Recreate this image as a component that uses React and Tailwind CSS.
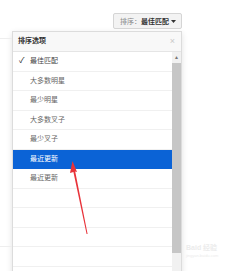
const items = ['最佳匹配', '大多数明星', '最少明星', '大多数叉子', '最少叉子', '最近更新', '最近更新', '', '', '', '', ''];

export default function App() {
  return (
    <div
      className="relative w-[241px] h-[271px] overflow-hidden bg-white"
      style={{ fontFamily: '"Liberation Sans", "Noto Sans CJK SC", sans-serif' }}
    >
      {/* faint page lines behind the panel */}
      <div className="absolute left-0 top-[38px] w-[12px] h-px bg-[#eeeeee]" />
      <div className="absolute left-0 top-[246px] w-[12px] h-px bg-[#eeeeee]" />

      <div className="flex justify-end pr-[59px] pt-[13px]">
        <div className="flex items-center h-[16px] w-[69px] pl-[6px] rounded-[2px] border border-[#d5d5d5] bg-[#f3f3f3] text-[7px] leading-none">
          <span className="text-[#888]">排序：</span>
          <span className="font-bold text-[#333]">最佳匹配</span>
          <svg className="ml-[2px]" width="5" height="3" viewBox="0 0 5 3">
            <polygon points="0,0 5,0 2.5,3" fill="#333" />
          </svg>
        </div>
      </div>

      <div className="ml-[12px] mt-[2px] w-[170px] border border-[#dcdcdc] bg-white shadow-[0_2px_6px_rgba(0,0,0,0.12)]">
        <div className="flex items-center justify-between h-[20px] pl-[5px] pr-[6px] bg-[#f8f8f8] border-b border-[#e5e5e5]">
          <span className="text-[7px] font-bold text-[#333]">排序选项</span>
          <span className="text-[9px] text-[#c8c8c8] leading-none">×</span>
        </div>
        <div className="flex">
          <div className="flex-1 flex flex-col">
            {items.map((t, i) => (
              <div
                key={i}
                className={`flex items-center h-[19.5px] shrink-0 border-b text-[7px] ${
                  i === 5 ? 'bg-[#0b63d6] border-[#0b63d6] text-white' : 'border-[#f0f0f0] text-[#666]'
                }`}
              >
                <span className="w-[17px] pl-[6px] text-[8px] text-[#222]">{i === 0 ? '✓' : ''}</span>
                <span className={i === 0 ? 'text-[#444]' : ''}>{t}</span>
              </div>
            ))}
          </div>
          <div className="w-[9px] flex flex-col items-center bg-[#f1f1f1]">
            <span className="mt-[3px] text-[5px] leading-none text-[#777]">▲</span>
            <div className="mt-[3px] w-[9px] h-[190px] bg-[#c6c6c6]" />
          </div>
        </div>
      </div>

      {/* watermark */}
      <div className="absolute left-[186px] top-[244px] flex flex-col leading-none text-[#ececec]">
        <span className="text-[7px] font-bold">Baid 经验</span>
        <span className="text-[4px] mt-[3px]">jingyan.baidu.com</span>
      </div>

      {/* red arrow annotation */}
      <svg className="absolute left-0 top-0 pointer-events-none" width="241" height="271" viewBox="0 0 241 271">
        <polygon points="72.5,161 77,172 75.2,171.5 87.6,234 86.6,234 73.4,172 70,173" fill="#e8333a" />
      </svg>
    </div>
  );
}
